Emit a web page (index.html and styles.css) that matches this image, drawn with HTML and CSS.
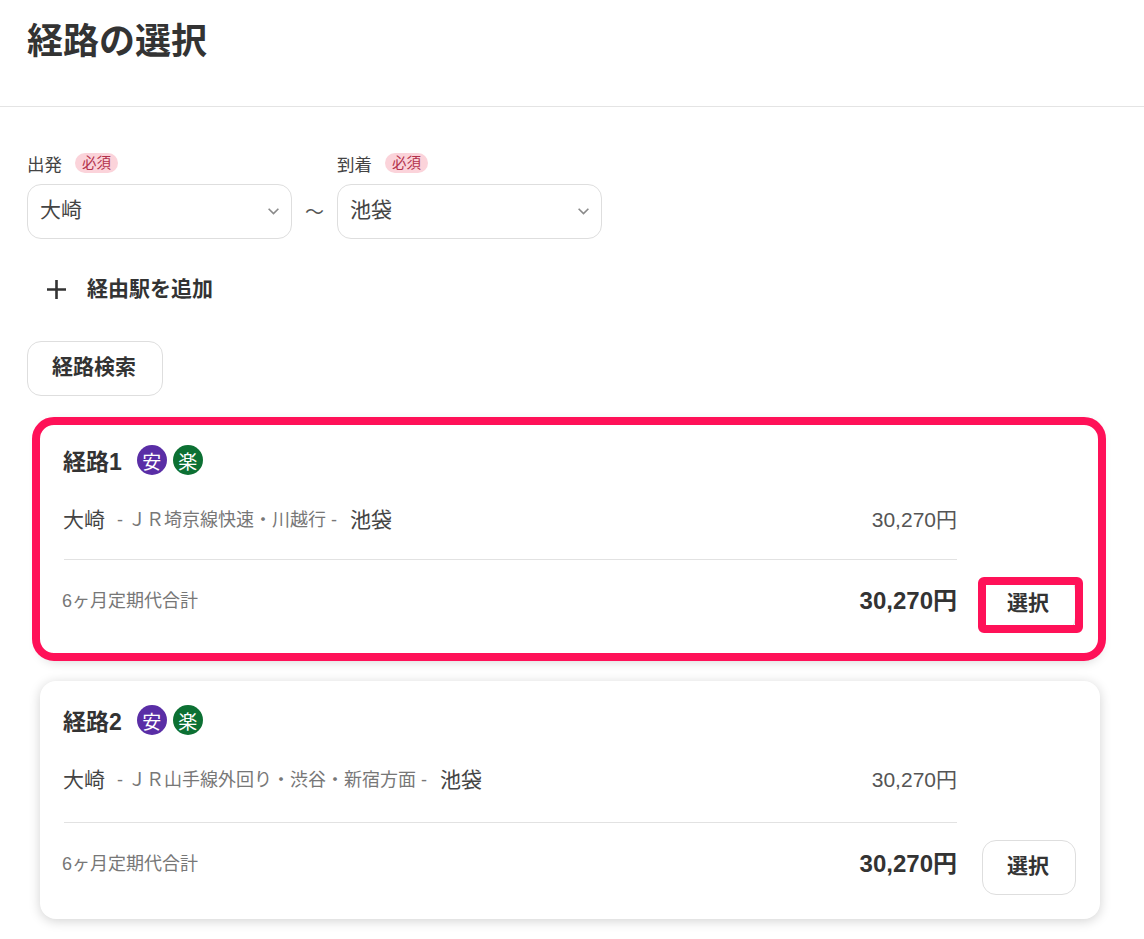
FILE: index.html
```html
<!DOCTYPE html>
<html lang="ja">
<head>
<meta charset="utf-8">
<title>経路の選択</title>
<link rel="stylesheet" href="styles.css">
</head>
<body>
<header class="page-head"><h1 class="page-title">経路の選択</h1></header>
<main class="content">
  <section class="stations">
    <div class="field">
      <div class="field-label"><span>出発</span><span class="req">必須</span></div>
      <div class="select"><span class="select-text">大崎</span>
        <svg class="chev" viewBox="0 0 12 8" width="13" height="9"><path d="M1.5 1.5 6 6l4.5-4.5" fill="none" stroke="#8a8a8a" stroke-width="1.5"/></svg>
      </div>
    </div>
    <div class="tilde">〜</div>
    <div class="field">
      <div class="field-label"><span>到着</span><span class="req">必須</span></div>
      <div class="select"><span class="select-text">池袋</span>
        <svg class="chev" viewBox="0 0 12 8" width="13" height="9"><path d="M1.5 1.5 6 6l4.5-4.5" fill="none" stroke="#8a8a8a" stroke-width="1.5"/></svg>
      </div>
    </div>
  </section>
  <div class="add-via">
    <svg viewBox="0 0 19 19" width="19" height="19"><path d="M9.5 0v19M0 9.5h19" stroke="#333" stroke-width="2.6" fill="none"/></svg>
    <span class="add-text">経由駅を追加</span>
  </div>
  <button class="btn search-btn"><span class="btn-text">経路検索</span></button>
  <div class="routes">
    <article class="card card-first">
      <div class="highlight"></div>
      <div class="card-title"><span>経路1</span><span class="badge badge-purple">安</span><span class="badge badge-green">楽</span></div>
      <div class="route-row">
        <div class="route"><span class="st">大崎</span><span class="line-name">- ＪＲ埼京線快速・川越行 -</span><span class="st">池袋</span></div>
        <div class="fare">30,270円</div>
      </div>
      <div class="total-row">
        <span class="total-label">6ヶ月定期代合計</span>
        <span class="total">30,270円</span>
        <div class="btn-wrap"><button class="btn select-btn"><span class="btn-text">選択</span></button><div class="btn-highlight"></div></div>
      </div>
    </article>
    <article class="card">
      <div class="card-title"><span>経路2</span><span class="badge badge-purple">安</span><span class="badge badge-green">楽</span></div>
      <div class="route-row">
        <div class="route"><span class="st">大崎</span><span class="line-name">- ＪＲ山手線外回り・渋谷・新宿方面 -</span><span class="st">池袋</span></div>
        <div class="fare">30,270円</div>
      </div>
      <div class="total-row">
        <span class="total-label">6ヶ月定期代合計</span>
        <span class="total">30,270円</span>
        <div class="btn-wrap"><button class="btn select-btn"><span class="btn-text">選択</span></button></div>
      </div>
    </article>
  </div>
</main>
</body>
</html>
```
FILE: styles.css
```css
* { box-sizing: border-box; }
html, body { margin: 0; padding: 0; }
body {
  width: 1144px;
  height: 939px;
  overflow: hidden;
  background: #fff;
  color: #333;
  font-family: "Liberation Sans", "Noto Sans CJK JP", sans-serif;
}
.page-head { height: 107px; border-bottom: 1px solid #e4e4e4; padding: 19px 27px 0; }
.page-title { margin: 0; font-size: 36px; line-height: 46px; font-weight: 700; color: #333; }
.content { padding: 45px 0 0 27px; }
.stations { display: flex; align-items: flex-end; }
.field { width: 265px; }
.field-label { display: flex; align-items: center; gap: 13px; height: 22px; font-size: 17.5px; color: #444; margin-bottom: 10px; }
.req { background: #fbd3da; color: #b3324c; font-size: 14.5px; line-height: 20px; height: 20px; padding: 0 7px; border-radius: 10px; }
.select {
  height: 55px;
  border: 1px solid #dedede;
  border-radius: 14px;
  display: flex;
  align-items: center;
  justify-content: space-between;
  padding: 0 11px 0 12px;
  font-size: 21px;
  color: #444;
  background: #fff;
}
.select-text { position: relative; top: -4px; }
.tilde { width: 45px; height: 55px; line-height: 58px; text-align: center; font-size: 19px; color: #555; }
.add-via { display: flex; align-items: center; gap: 21px; margin: 27px 0 0 20px; height: 46px; font-size: 21px; font-weight: 700; color: #333; }
.add-text { position: relative; top: -2px; }
.btn {
  font-family: inherit;
  background: #fff;
  border: 1px solid #dedede;
  border-radius: 14px;
  font-weight: 700;
  color: #333;
  padding: 0 2px 0 0;
}
.btn-text { position: relative; top: -4px; }
.search-btn { display: block; margin-top: 29px; width: 136px; height: 55px; font-size: 21px; }
.routes { display: flex; flex-direction: column; gap: 22px; margin: 25px 0 0 13px; width: 1060px; }
.card {
  position: relative;
  height: 238px;
  background: #fff;
  border-radius: 16px;
  padding: 21px 23px 0;
  box-shadow: 0 2px 12px rgba(0,0,0,.18);
}
.highlight {
  position: absolute;
  left: -8px;
  right: -6px;
  top: -4px;
  bottom: -2px;
  border: 8px solid #ff1158;
  border-radius: 22px;
  pointer-events: none;
}
.card-title { display: flex; align-items: center; gap: 6px; height: 36px; font-size: 23px; font-weight: 700; color: #333; }
.card-title > span:first-child { margin-right: 9px; }
.badge { width: 30px; height: 30px; border-radius: 50%; color: #fff; font-size: 19px; font-weight: 400; display: flex; align-items: center; justify-content: center; }
.badge-purple { background: #5a2ea6; }
.badge-green { background: #0c7033; }
.route-row { display: flex; justify-content: space-between; align-items: center; width: 894px; height: 44px; margin: 18px 0 22px; }
.card-first .route-row { margin-bottom: 19px; }
.route { display: flex; align-items: center; color: #666; font-size: 18px; }
.st { font-size: 21px; color: #444; }
.line-name { margin: 0 13px 0 12px; color: #777; }
.fare { font-size: 21px; color: #555; }
.total-row { display: flex; align-items: center; width: 1013px; position: relative; padding-top: 18px; }
.total-row::before { content: ""; position: absolute; left: 1px; top: 0; width: 893px; height: 1px; background: #e2e2e2; }
.total-label { font-size: 18px; color: #777; flex: 1; margin: 0 0 12px -1px; }
.total { font-size: 24px; font-weight: 700; color: #333; margin: 0 25px 12px 0; }
.btn-wrap { position: relative; }
.select-btn { display: block; width: 94px; height: 55px; font-size: 21px; }
.btn-highlight {
  position: absolute;
  left: -4px;
  right: -7px;
  top: 0;
  bottom: -1px;
  border: 8px solid #ff1158;
  border-radius: 6px;
  pointer-events: none;
}
```
